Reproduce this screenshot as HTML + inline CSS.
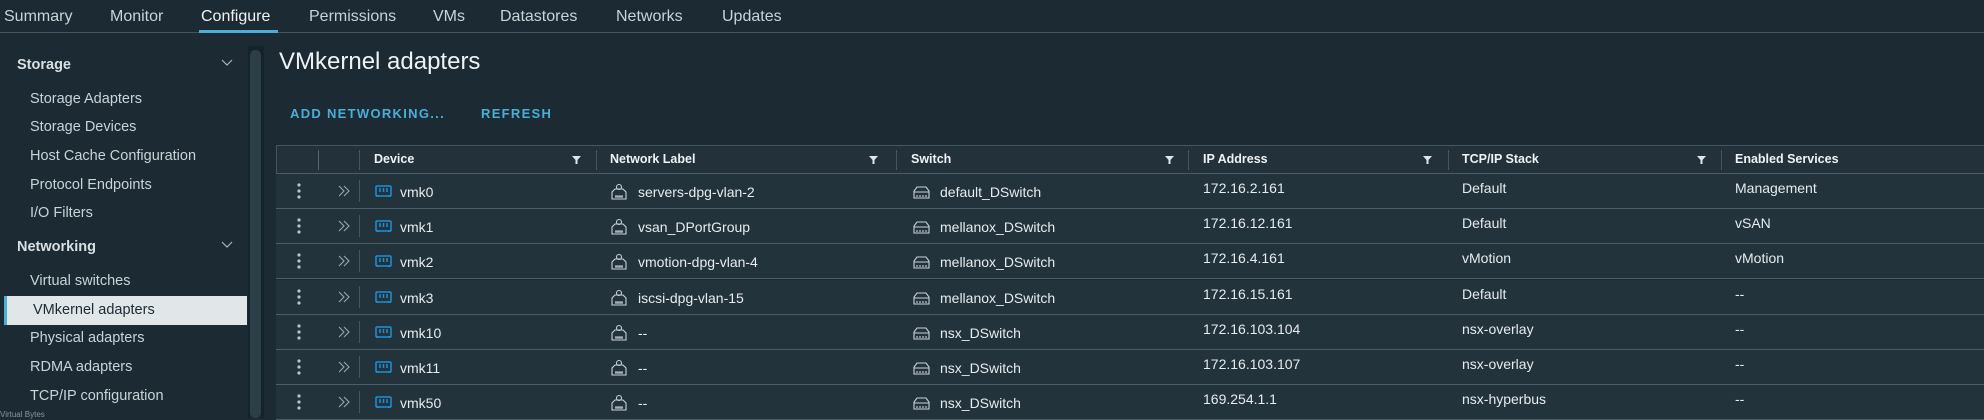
<!DOCTYPE html>
<html><head><meta charset="utf-8"><style>
*{margin:0;padding:0;box-sizing:border-box}
body{width:1984px;height:418px;overflow:hidden;background:#1b2a33;font-family:"Liberation Sans",sans-serif;color:#e8eef1;position:relative}
.a{position:absolute;white-space:nowrap}
.tab{top:8px;font-size:16px;color:#c9d3d8}
.sb{left:30px;font-size:14.5px;color:#c9d3d8}
.sh{left:17px;font-size:14.5px;font-weight:bold;color:#d8e0e4}
.hd{font-size:12.5px;font-weight:bold;color:#eef2f4;top:152px}
.row{position:absolute;left:276px;right:0;height:35px;background:#22333c;border-bottom:1.5px solid #4c5d66}
.c{position:absolute;top:10px;font-size:14px;color:#e6ecef}
.c.u{top:6px}
</style></head><body>
<div class="a tab" style="left:4px">Summary</div>
<div class="a tab" style="left:110px">Monitor</div>
<div class="a tab" style="left:201px;color:#eef2f4">Configure</div>
<div class="a tab" style="left:309px">Permissions</div>
<div class="a tab" style="left:433px">VMs</div>
<div class="a tab" style="left:500px">Datastores</div>
<div class="a tab" style="left:616px">Networks</div>
<div class="a tab" style="left:722px">Updates</div>
<div class="a" style="left:0;right:0;top:32px;height:1px;background:#46565e"></div>
<div class="a" style="left:199px;width:79px;top:30px;height:3px;background:#49afd9"></div>

<div class="a sh" style="top:57px">Storage</div>
<svg class="a" style="left:221px;top:59px" width="12" height="8"><path d="M1 1l5 5 5-5" stroke="#aab5bb" fill="none" stroke-width="1.2"/></svg>
<div class="a sb" style="top:91px">Storage Adapters</div>
<div class="a sb" style="top:119px">Storage Devices</div>
<div class="a sb" style="top:148px">Host Cache Configuration</div>
<div class="a sb" style="top:177px">Protocol Endpoints</div>
<div class="a sb" style="top:205px">I/O Filters</div>
<div class="a sh" style="top:239px">Networking</div>
<svg class="a" style="left:221px;top:241px" width="12" height="8"><path d="M1 1l5 5 5-5" stroke="#aab5bb" fill="none" stroke-width="1.2"/></svg>
<div class="a sb" style="top:273px">Virtual switches</div>
<div class="a" style="left:4px;width:243px;top:296px;height:29px;background:#e1e6e9;border-left:3px solid #49afd9"></div>
<div class="a sb" style="top:302px;left:33px;color:#1b2a33">VMkernel adapters</div>
<div class="a sb" style="top:330px">Physical adapters</div>
<div class="a sb" style="top:359px">RDMA adapters</div>
<div class="a sb" style="top:388px">TCP/IP configuration</div>
<div class="a" style="left:0;top:410px;font-size:8px;color:#8a969c">Virtual Bytes</div>
<div class="a" style="left:248px;width:16px;top:46px;bottom:0;background:#17232a"></div>
<div class="a" style="left:250px;width:11px;top:50px;bottom:0;background:#2c3e48;border-radius:5px"></div>

<div class="a" style="left:279px;top:48px;font-size:24px;color:#eef2f4">VMkernel adapters</div>
<div class="a" style="left:290px;top:106px;font-size:13px;font-weight:bold;letter-spacing:1.3px;color:#49afd9">ADD NETWORKING...</div>
<div class="a" style="left:481px;top:106px;font-size:13px;font-weight:bold;letter-spacing:1.3px;color:#49afd9">REFRESH</div>

<div class="a" style="left:276px;right:0;top:145px;height:29px;background:#22313a;border-top:1px solid #46565e;border-left:1px solid #46565e;border-bottom:1.5px solid #4c5d66"></div>
<div class="a" style="left:318px;top:150px;width:1px;height:20px;background:#56666e"></div>
<div class="a" style="left:359px;top:150px;width:1px;height:20px;background:#46565e"></div>
<div class="a hd" style="left:374px">Device</div>
<div class="a hd" style="left:610px">Network Label</div>
<div class="a hd" style="left:911px">Switch</div>
<div class="a hd" style="left:1203px">IP Address</div>
<div class="a hd" style="left:1462px">TCP/IP Stack</div>
<div class="a hd" style="left:1735px">Enabled Services</div>
<svg class="a" style="left:0;top:0" width="1984" height="180">
<g fill="#dfe6ea">
<path d="M572 156h9l-3.5 4v4h-2v-4z"/><path d="M869 156h9l-3.5 4v4h-2v-4z"/><path d="M1165 156h9l-3.5 4v4h-2v-4z"/><path d="M1423 156h9l-3.5 4v4h-2v-4z"/><path d="M1697 156h9l-3.5 4v4h-2v-4z"/></g>
<g fill="#46565e"><rect x="596" y="150" width="1" height="20"/><rect x="896" y="150" width="1" height="20"/><rect x="1188" y="150" width="1" height="20"/><rect x="1448" y="150" width="1" height="20"/><rect x="1721" y="150" width="1" height="20"/></g>
</svg>

<div id="rows"></div>
<script>
const d=[["vmk0","servers-dpg-vlan-2","default_DSwitch","172.16.2.161","Default","Management"],
["vmk1","vsan_DPortGroup","mellanox_DSwitch","172.16.12.161","Default","vSAN"],
["vmk2","vmotion-dpg-vlan-4","mellanox_DSwitch","172.16.4.161","vMotion","vMotion"],
["vmk3","iscsi-dpg-vlan-15","mellanox_DSwitch","172.16.15.161","Default","--"],
["vmk10","--","nsx_DSwitch","172.16.103.104","nsx-overlay","--"],
["vmk11","--","nsx_DSwitch","172.16.103.107","nsx-overlay","--"],
["vmk50","--","nsx_DSwitch","169.254.1.1","nsx-hyperbus","--"]];
let h="";
d.forEach((r,i)=>{const t=174+i*35.2;
h+=`<div class="row" style="top:${t}px">
<svg style="position:absolute;left:0;top:0" width="140" height="35">
<g fill="#b9c4ca"><circle cx="23" cy="11" r="1.6"/><circle cx="23" cy="17" r="1.6"/><circle cx="23" cy="23" r="1.6"/></g>
<path d="M63 12l5 5-5 5M68 12l5 5-5 5" stroke="#9aa7ae" fill="none" stroke-width="1.1"/>
<rect x="83" y="6" width="1" height="22" fill="#46565e"/>
<rect x="100" y="12" width="15" height="10" rx="1" stroke="#1f8fd6" stroke-width="1.5" fill="none"/>
<path d="M104 14v4M107.5 14v4M111 14v4M100 22h3M112 22h3" stroke="#1f8fd6" stroke-width="1.5"/>
</svg>
<div class="c" style="left:124px">${r[0]}</div>
<svg style="position:absolute;left:334px;top:8px" width="20" height="20"><g stroke="#c9d3d8" fill="none" stroke-width="1.1"><circle cx="9" cy="5" r="2.5"/><path d="M2 17V10l3-3h8l3 3v7zM5 14h8M6 14v2M8 14v2M10 14v2M12 14v2"/></g></svg>
<div class="c" style="left:362px">${r[1]}</div>
<svg style="position:absolute;left:636px;top:9px" width="20" height="18"><g stroke="#c9d3d8" fill="none" stroke-width="1.1"><path d="M2 15V8l3-4h9l3 4v7zM2 9h15M5 12v2M8 12v2M11 12v2M14 12v2"/></g></svg>
<div class="c" style="left:664px">${r[2]}</div>
<div class="c u" style="left:927px">${r[3]}</div>
<div class="c u" style="left:1186px">${r[4]}</div>
<div class="c u" style="left:1459px">${r[5]}</div></div>`;});
document.getElementById("rows").innerHTML=h;
</script>
</body></html>
